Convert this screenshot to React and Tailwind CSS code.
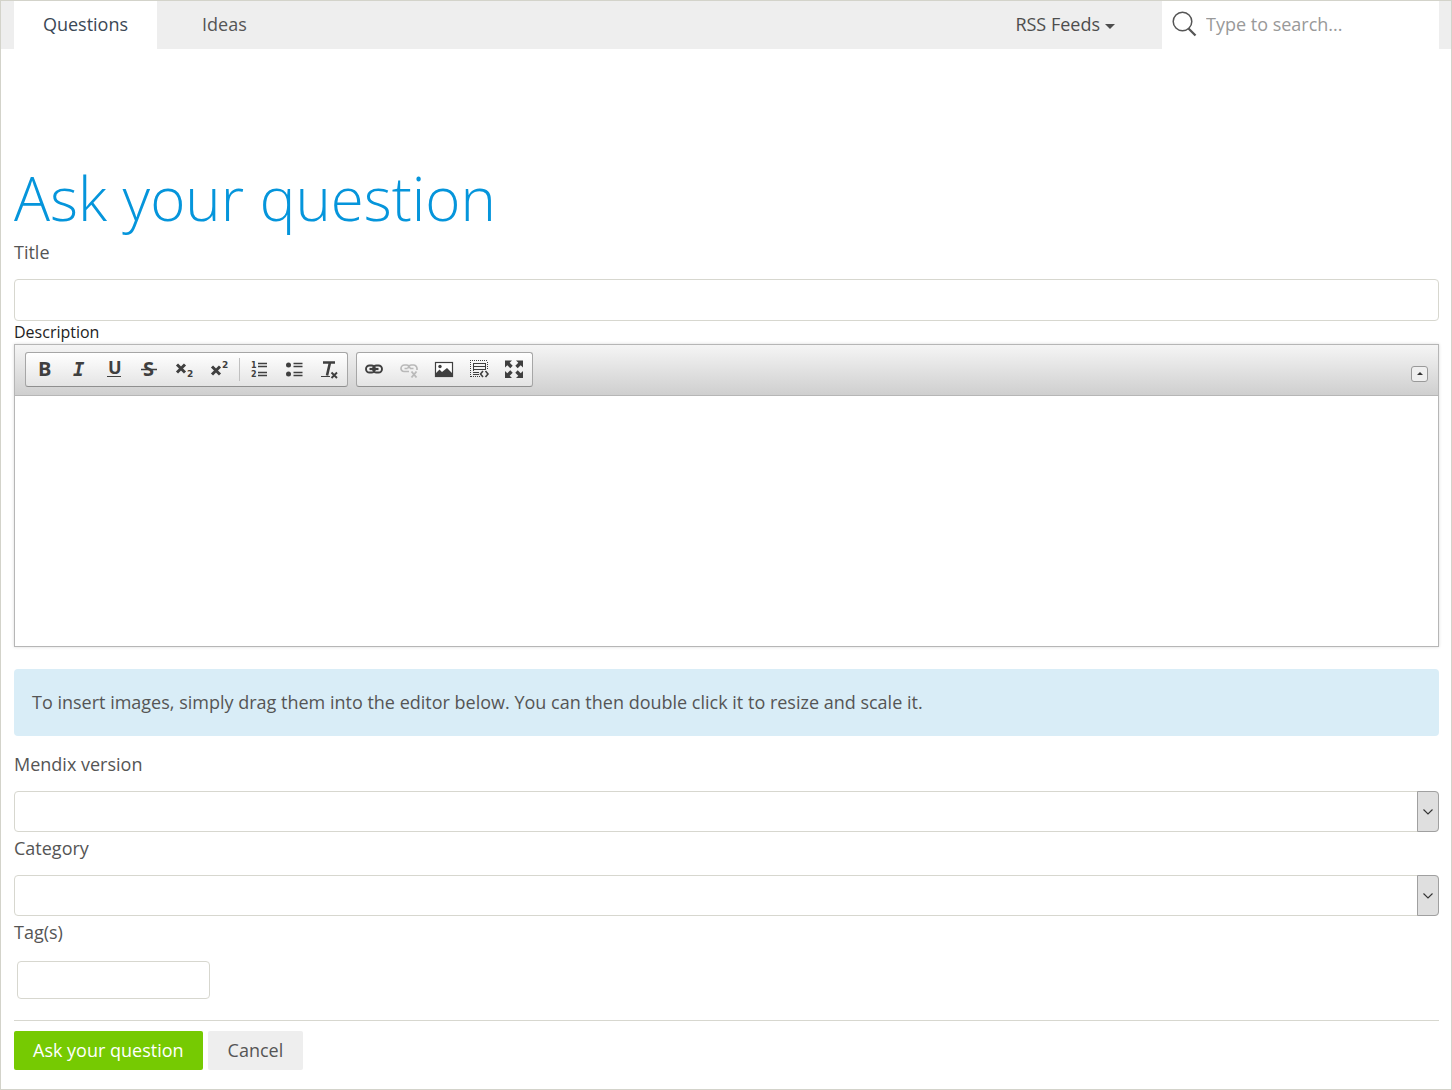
import React from 'react';

function Icon({ children }) {
  return (
    <svg width="20" height="20" viewBox="0 0 20 20" fill="none" stroke="#3f3f3f" className="overflow-visible" aria-hidden="true">
      {children}
    </svg>
  );
}

function Glyph({ children, ...rest }) {
  return (
    <text fill="#3f3f3f" stroke="none" fontWeight="700" {...rest}>
      {children}
    </text>
  );
}

const SANS = '"Open Sans", sans-serif';
const MONO = '"DejaVu Sans Mono", monospace';
const SMALL = '"DejaVu Sans", sans-serif';

const icons = {
  bold: (
    <Icon>
      <Glyph x="4" y="17" fontSize="20" fontFamily={SANS}>B</Glyph>
    </Icon>
  ),
  italic: (
    <Icon>
      <Glyph x="4" y="17" fontSize="19" fontStyle="italic" fontFamily={MONO}>I</Glyph>
    </Icon>
  ),
  underline: (
    <Icon>
      <Glyph x="4" y="15" fontSize="18" fontFamily={SANS}>U</Glyph>
      <path d="M3 17.500h14" />
    </Icon>
  ),
  strike: (
    <Icon>
      <Glyph x="4" y="17" fontSize="20" fontFamily={SANS}>S</Glyph>
      <path d="M2 10.500h16" strokeWidth="1.500" />
    </Icon>
  ),
  subscript: (
    <Icon>
      <path d="M3 5.500l8 8M11 5.500l-8 8" strokeWidth="3" />
      <Glyph x="13" y="18" fontSize="9" fontFamily={SMALL}>2</Glyph>
    </Icon>
  ),
  superscript: (
    <Icon>
      <path d="M3 7.500l8 8M11 7.500l-8 8" strokeWidth="3" />
      <Glyph x="13" y="9" fontSize="9" fontFamily={SMALL}>2</Glyph>
    </Icon>
  ),
  numbered: (
    <Icon>
      <Glyph x="2" y="9" fontSize="8" fontFamily={SMALL}>1</Glyph>
      <Glyph x="2" y="18" fontSize="8" fontFamily={SMALL}>2</Glyph>
      <path d="M9 4.500h9M9 7.500h9M9 13.500h9M9 16.500h9" strokeWidth="1.300" />
    </Icon>
  ),
  bulleted: (
    <Icon>
      <circle cx="4.500" cy="6" r="2.500" fill="#3f3f3f" stroke="none" />
      <circle cx="4.500" cy="15" r="2.500" fill="#3f3f3f" stroke="none" />
      <path d="M9.500 4.500h9M9.500 7.500h9M9.500 13.500h9M9.500 16.500h9" strokeWidth="1.300" />
    </Icon>
  ),
  clear: (
    <Icon>
      <path d="M4 3.500h12M11 3.500l-3 13" strokeWidth="2.600" />
      <path d="M2 17.500h9" />
      <path d="M12.500 13.500l5.500 5.500M18 13.500l-5.500 5.500" strokeWidth="1.900" />
    </Icon>
  ),
  link: (
    <Icon>
      <rect x="2" y="6.500" width="9" height="7" rx="3.500" strokeWidth="1.900" />
      <rect x="9" y="6.500" width="9" height="7" rx="3.500" strokeWidth="1.900" />
      <path d="M5.500 10h9" strokeWidth="2.200" />
    </Icon>
  ),
  unlink: (
    <Icon>
      <g stroke="#b9b9b9" strokeWidth="1.700">
        <path d="M10 12.500H5a3 3 0 0 1-3-3v0a3.500 3.500 0 0 1 3.500-3.500h2A3.500 3.500 0 0 1 11 9.500M9 9.500A3.500 3.500 0 0 1 12.500 6h2A3.500 3.500 0 0 1 18 9.500v1.500M5.500 9.500h3M11 9.500h3.500" />
        <path d="M12.500 12.500l5 6M17.500 12.500l-5 6" strokeWidth="1.900" />
      </g>
    </Icon>
  ),
  image: (
    <Icon>
      <rect x="1.500" y="3.500" width="17" height="14" fill="#fff" strokeWidth="1.200" />
      <circle cx="6" cy="7.500" r="1.700" fill="#3f3f3f" stroke="none" />
      <path d="M2 17v-3l3.500-3.500 2.500 2.500 5-4 5 5v3z" fill="#3f3f3f" stroke="none" />
    </Icon>
  ),
  div: (
    <Icon>
      <path d="M1 1.500h18M1.500 3v15M18.500 3v7M2 17.500h9" strokeDasharray="1 1" />
      <path d="M4 4.500h13M4 7.500h13M4 10.500h13M4 13.500h6M4 15.500h6" />
      <path d="M4.500 4v8M16.500 4v6" />
      <path d="M14 12l-2.500 3 2.500 3M16.500 12l2.500 3-2.500 3" strokeWidth="1.600" />
    </Icon>
  ),
  maximize: (
    <Icon>
      <g fill="#3f3f3f" stroke="none">
        <path d="M1 1.500h7L5.700 3.800l3 3-2.400 2.400-3-3L1 8.500z" />
        <path d="M19 1.500h-7l2.300 2.300-3 3 2.400 2.400 3-3L19 8.500z" />
        <path d="M1 19h7l-2.300-2.300 3-3-2.400-2.400-3 3L1 12z" />
        <path d="M19 19h-7l2.300-2.300-3-3 2.400-2.400 3 3L19 12z" />
      </g>
    </Icon>
  ),
};

function Tool({ name, label, disabled }) {
  return (
    <button type="button" aria-label={label} disabled={disabled} className="flex h-8 w-[35px] items-center pb-[2px] pl-[7px]">
      {icons[name]}
    </button>
  );
}

function ToolGroup({ children }) {
  return (
    <div className="flex h-[35px] items-center rounded-[3px] border border-[#a6a6a6] border-b-[#8f8f8f] bg-linear-to-b from-white to-[#e4e4e4]">
      {children}
    </div>
  );
}

function SelectField({ id, label }) {
  return (
    <div>
      <label htmlFor={id} className="block h-[43px] pt-1 leading-6">{label}</label>
      <div className="relative h-[41px]">
        <select id={id} className="block h-full w-full appearance-none rounded-sm border border-[#d7d7cf] bg-white px-3">
          <option></option>
        </select>
        <span className="pointer-events-none absolute inset-y-0 right-0 flex w-[22px] items-center justify-center rounded-r-sm border border-[#a0a0a0] bg-[#dfdfdf]">
          <svg width="10" height="6" viewBox="0 0 10 6" fill="none" stroke="#333" aria-hidden="true">
            <path d="M0.500 0.500L5 5l4.500-4.500" strokeWidth="1.100" />
          </svg>
        </span>
      </div>
    </div>
  );
}

export default function App() {
  return (
    <div className="min-h-screen border border-[#d3d3ca] bg-white font-['Open_Sans',sans-serif] text-[18px] text-[#555]">
      <nav className="flex h-12 items-stretch bg-[#eee] px-3 pl-[13px] leading-6">
        <a href="#questions" className="flex w-[143px] items-center justify-center bg-white pb-[2px] text-[#3b4856]">Questions</a>
        <a href="#ideas" className="ml-[45px] flex items-center pb-[2px]">Ideas</a>
        <button type="button" className="mr-[47px] ml-auto flex items-center gap-[5px] pb-[2px] text-[#4d4d4d]">
          RSS Feeds
          <svg width="10" height="5" viewBox="0 0 10 5" className="mt-1" aria-hidden="true">
            <path d="M0 0h10L5 5z" fill="#4d4d4d" />
          </svg>
        </button>
        <label className="flex w-[277px] items-center gap-[9px] bg-white pb-[2px] pl-[10px]">
          <svg width="25" height="26" viewBox="0 0 25 26" fill="none" stroke="#555" className="shrink-0" aria-hidden="true">
            <circle cx="10.500" cy="10.500" r="9.300" strokeWidth="1.500" />
            <path d="M16.500 17.500l7 7" strokeWidth="2.300" />
          </svg>
          <input type="search" aria-label="Search" placeholder="Type to search..." className="h-full w-full min-w-0 outline-none placeholder:text-[#999]" />
        </label>
      </nav>

      <form className="px-3 pt-[108px] pb-[19px] pl-[13px]">
        <h1 className="text-[60px] leading-[82px] font-light text-[#0595db]">Ask your question</h1>
        <label htmlFor="title" className="block h-10 pt-px leading-6">Title</label>
        <input id="title" type="text" className="block h-[42px] w-full rounded-sm border border-[#d7d7cf] px-3" />

        <label htmlFor="description" className="block h-[23px] text-[16px] leading-[22px] text-[#222]">Description</label>
        <div className="border border-[#b6b6b6] shadow-[0_0_3px_rgba(0,0,0,0.15)]">
          <div className="flex h-[51px] items-start gap-2 border-b border-[#b6b6b6] bg-linear-to-b from-[#f5f5f5] to-[#cfcfcf] px-[10px] pt-[7px]">
            <ToolGroup>
              <div className="w-px" />
              <Tool name="bold" label="Bold" />
              <Tool name="italic" label="Italic" />
              <Tool name="underline" label="Underline" />
              <Tool name="strike" label="Strikethrough" />
              <Tool name="subscript" label="Subscript" />
              <Tool name="superscript" label="Superscript" />
              <span className="mx-[2px] h-[23px] w-px bg-[#c0c0c0]" />
              <Tool name="numbered" label="Numbered list" />
              <Tool name="bulleted" label="Bulleted list" />
              <Tool name="clear" label="Remove format" />
            </ToolGroup>
            <ToolGroup>
              <Tool name="link" label="Link" />
              <Tool name="unlink" label="Unlink" disabled />
              <Tool name="image" label="Image" />
              <Tool name="div" label="Create div container" />
              <Tool name="maximize" label="Maximize" />
            </ToolGroup>
            <button type="button" aria-label="Collapse toolbar" className="mt-[14px] ml-auto flex h-4 w-[17px] items-center justify-center rounded-[3px] border border-[#999] bg-[#efefef] pb-[2px]">
              <svg width="6" height="3" viewBox="0 0 6 3" aria-hidden="true">
                <path d="M0 3h6L3 0z" fill="#333" />
              </svg>
            </button>
          </div>
          <textarea id="description" className="block h-[250px] w-full resize-none p-3 outline-none" />
        </div>

        <p className="mt-[22px] mb-4 rounded-sm bg-[#d9edf7] px-[18px] py-[21px] leading-[25px]">
          To insert images, simply drag them into the editor below. You can then double click it to resize and scale it.
        </p>

        <div className="-mt-1">
          <SelectField id="version" label="Mendix version" />
          <SelectField id="category" label="Category" />
        </div>
        <label htmlFor="tags" className="block h-[45px] pt-1 leading-6">Tag(s)</label>
        <input id="tags" type="text" className="ml-[3px] block h-[38px] w-[193px] rounded-sm border border-[#d7d7cf] px-3" />

        <div className="mt-[21px] flex gap-[5px] border-t border-[#d7d7cf] pt-[10px]">
          <button type="submit" className="h-[39px] rounded-[2px] bg-[#76ca02] px-[19px] text-white">Ask your question</button>
          <button type="button" className="h-[39px] rounded-[2px] bg-[#eee] px-5">Cancel</button>
        </div>
      </form>
    </div>
  );
}
